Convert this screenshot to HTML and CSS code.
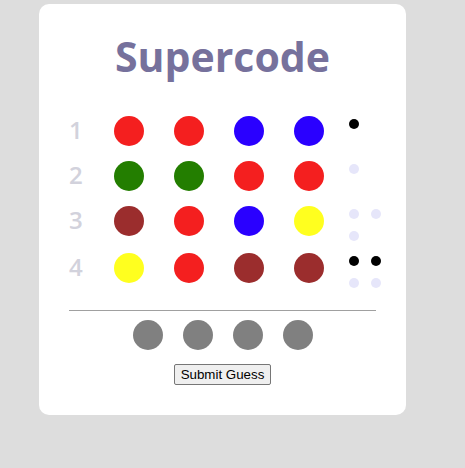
FILE: index.html
```html
<!DOCTYPE html>
<html>
<head>
<meta charset="utf-8">
<link rel="stylesheet" href="styles.css">
</head>
<body>
<div class="card">
  <h1 class="title">Supercode</h1>
  <div class="board">
    <div class="row">
      <span class="label">1</span>
      <div class="pegs-main">
        <span class="dot red"></span><span class="dot red"></span><span class="dot blue"></span><span class="dot blue"></span>
      </div>
      <div class="keys">
        <span class="key black"></span>
      </div>
    </div>
    <div class="row">
      <span class="label">2</span>
      <div class="pegs-main">
        <span class="dot green"></span><span class="dot green"></span><span class="dot red"></span><span class="dot red"></span>
      </div>
      <div class="keys">
        <span class="key light"></span>
      </div>
    </div>
    <div class="row">
      <span class="label">3</span>
      <div class="pegs-main">
        <span class="dot brown"></span><span class="dot red"></span><span class="dot blue"></span><span class="dot yellow"></span>
      </div>
      <div class="keys">
        <span class="key light"></span><span class="key light"></span><span class="key light"></span>
      </div>
    </div>
    <div class="row">
      <span class="label">4</span>
      <div class="pegs-main">
        <span class="dot yellow"></span><span class="dot red"></span><span class="dot brown"></span><span class="dot brown"></span>
      </div>
      <div class="keys">
        <span class="key black"></span><span class="key black"></span><span class="key light"></span><span class="key light"></span>
      </div>
    </div>
  </div>
  <div class="divider"></div>
  <div class="guess">
    <span class="dot gray"></span><span class="dot gray"></span><span class="dot gray"></span><span class="dot gray"></span>
  </div>
  <div class="actions">
    <button class="submit" type="button">Submit Guess</button>
  </div>
</div>
</body>
</html>
```
FILE: styles.css
```css
html, body {
  margin: 0;
  background: #dddddd;
}
body {
  padding: 4px 0 0 39px;
}
.card {
  box-sizing: border-box;
  width: 367px;
  background: #ffffff;
  border-radius: 10px;
  padding: 25px 30px 30px;
}
.title {
  margin: 0;
  text-align: center;
  font-family: "Open Sans", sans-serif;
  font-weight: 700;
  font-size: 41px;
  line-height: 54px;
  color: #76719c;
}
.board {
  margin-top: 33px;
  display: flex;
  flex-direction: column;
  gap: 15px;
}
.row {
  display: flex;
  align-items: flex-start;
}
.label {
  width: 16px;
  margin-right: 31px;
  text-align: center;
  font-family: "Open Sans", sans-serif;
  font-weight: 600;
  font-size: 24px;
  line-height: 28px;
  color: #d2d2dc;
}
.pegs-main {
  display: flex;
  gap: 30px;
}
.dot {
  display: block;
  width: 30px;
  height: 30px;
  border-radius: 50%;
}
.red { background: #f41f1f; }
.blue { background: #2a00ff; }
.green { background: #237e00; }
.brown { background: #9b2d2d; }
.yellow { background: #ffff1f; }
.gray { background: #808080; }
.keys {
  margin-left: 25px;
  padding-top: 3px;
  margin-bottom: -3px;
  display: grid;
  grid-template-columns: repeat(2, 10px);
  gap: 12px;
}
.key {
  display: block;
  width: 10px;
  height: 10px;
  border-radius: 50%;
}
.black { background: #000000; }
.light { background: #e6e6fa; }
.divider {
  margin-top: 25px;
  border-top: 1px solid #a0a0a0;
}
.guess {
  margin-top: 9px;
  display: flex;
  justify-content: center;
  gap: 20px;
}
.actions {
  margin-top: 14px;
  display: flex;
  justify-content: center;
}
.submit {
  font-family: "Liberation Sans", Arial, sans-serif;
  font-size: 13.333px;
  padding: 1px 6px;
  border: 1px solid #767676;
  border-radius: 2px;
  background: #efefef;
  color: #000;
  height: 21px;
}
```
